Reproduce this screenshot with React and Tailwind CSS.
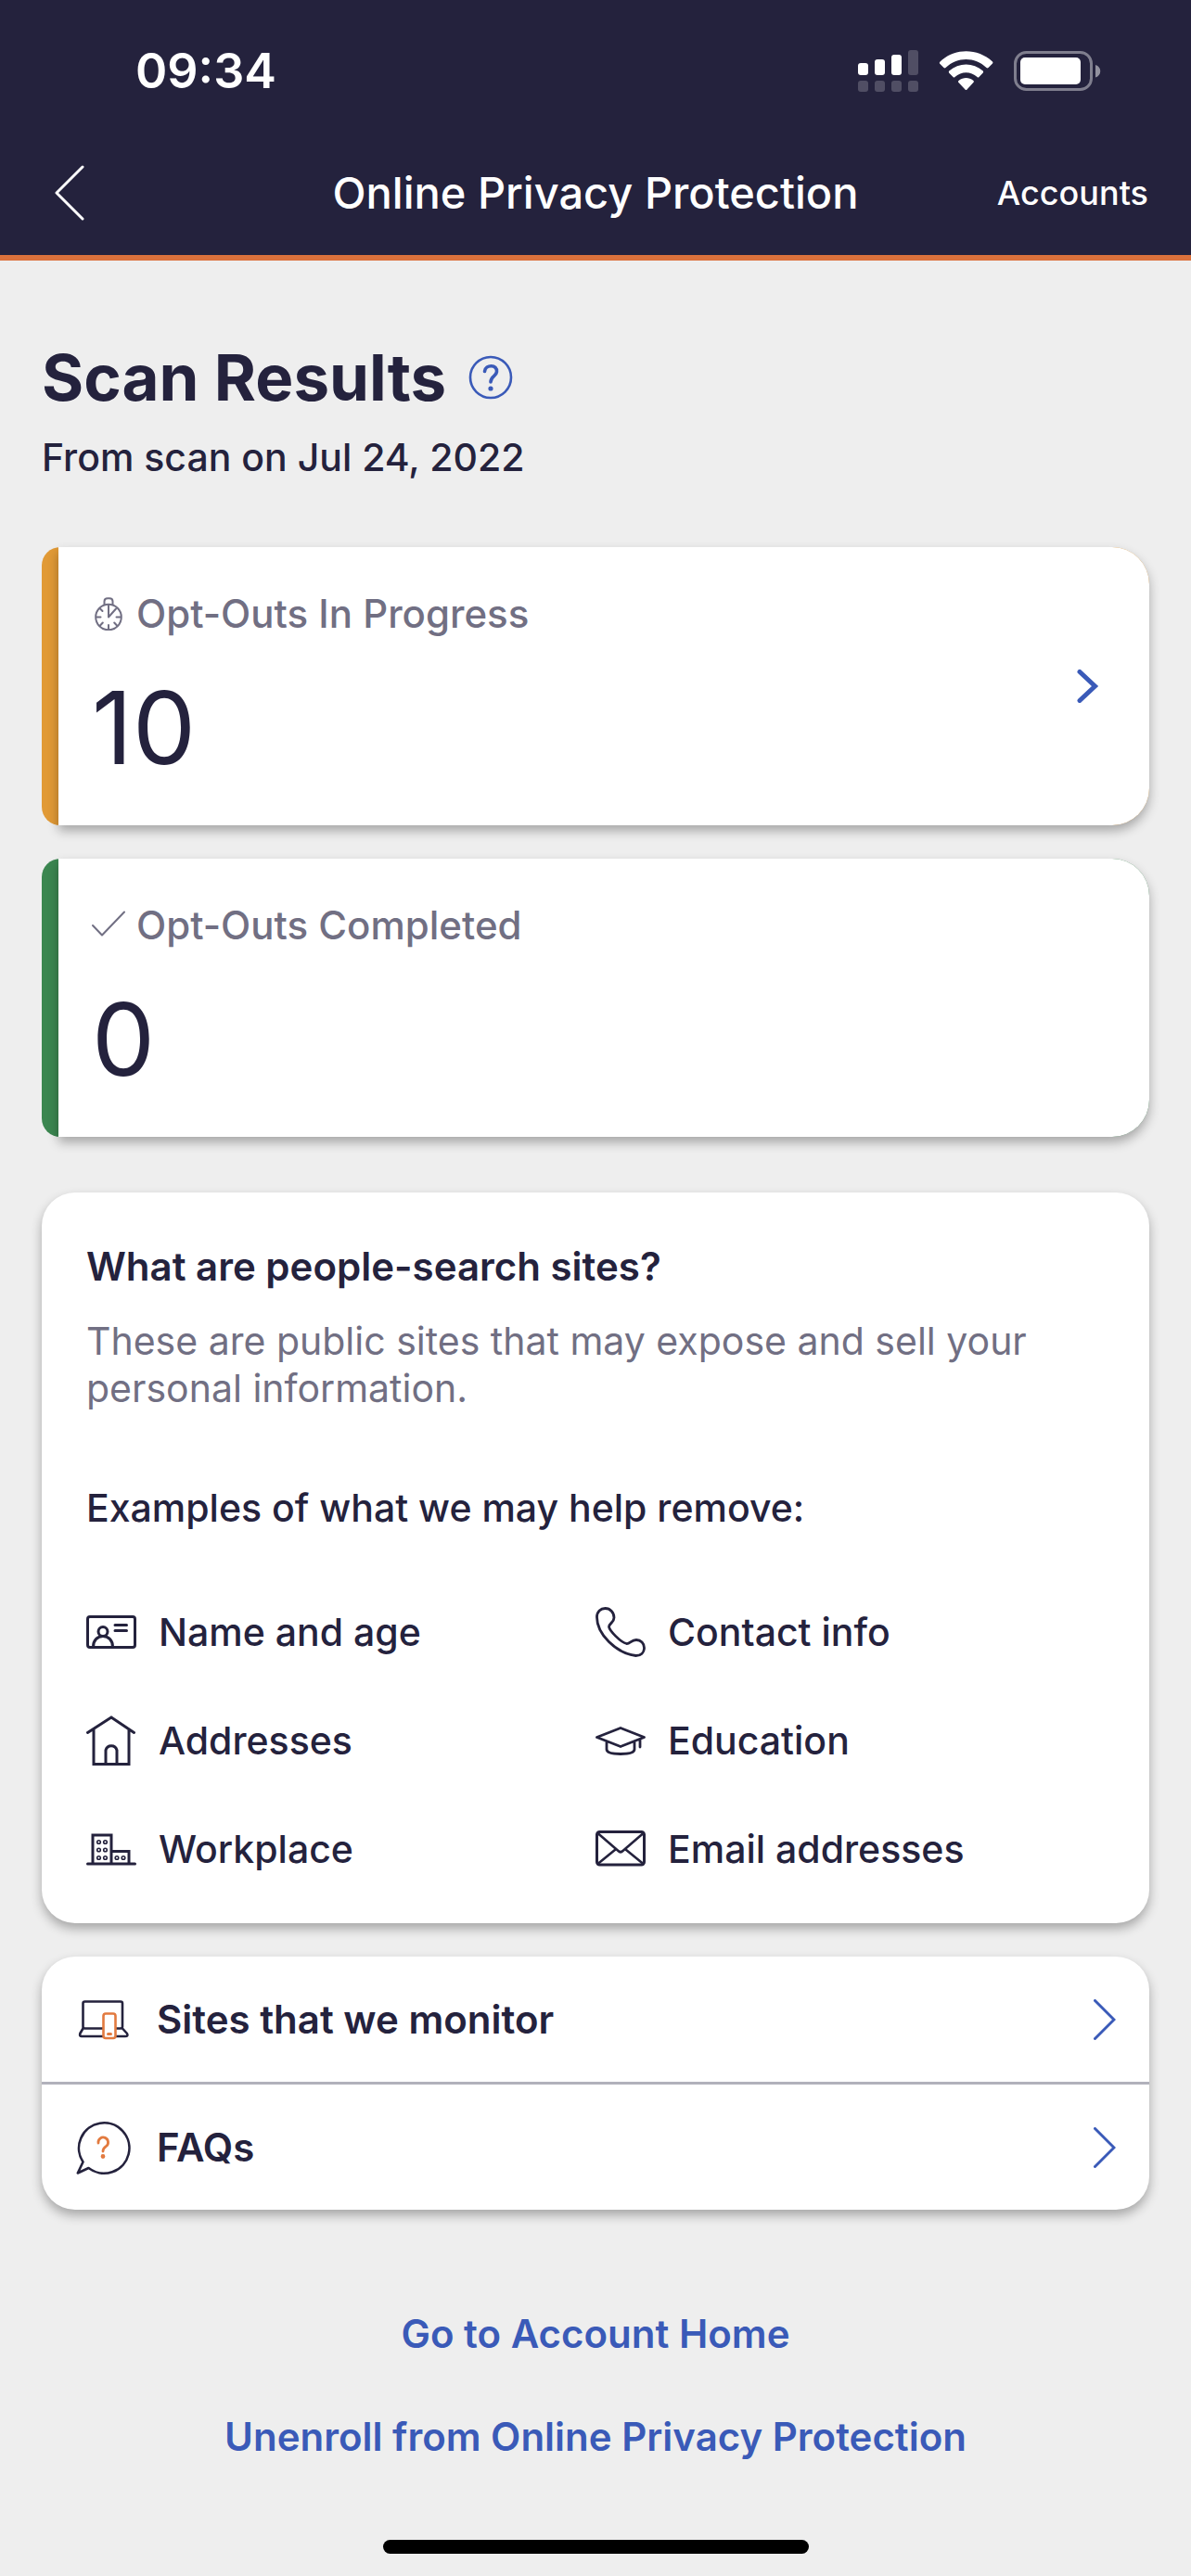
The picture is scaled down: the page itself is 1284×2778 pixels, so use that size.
const STATS = [
  { id: 'progress', label: 'Opt-Outs In Progress', value: 10, bar: 'bg-[#e19a36]', icon: StopwatchIcon, link: true },
  { id: 'completed', label: 'Opt-Outs Completed', value: 0, bar: 'bg-[#3b8650]', icon: CheckIcon, link: false },
]

const EXAMPLES = [
  { label: 'Name and age', icon: IdCardIcon },
  { label: 'Contact info', icon: PhoneIcon },
  { label: 'Addresses', icon: HouseIcon },
  { label: 'Education', icon: GradCapIcon },
  { label: 'Workplace', icon: BuildingIcon },
  { label: 'Email addresses', icon: EnvelopeIcon },
]

const MORE = [
  { label: 'Sites that we monitor', icon: DevicesIcon },
  { label: 'FAQs', icon: FaqIcon },
]

const CARD_SHADOW = 'shadow-[0_6px_12px_rgba(0,0,0,0.3)]'

function Icon({ className = 'w-[54px] h-[54px]', size = 54, sw = 3, children }) {
  return (
    <svg
      className={`flex-shrink-0 ${className}`}
      viewBox={`0 0 ${size} ${size}`}
      fill="none"
      stroke="currentColor"
      strokeWidth={sw}
      strokeLinecap="round"
      strokeLinejoin="round"
      aria-hidden="true"
    >
      {children}
    </svg>
  )
}

function StopwatchIcon() {
  return (
    <Icon className="w-9 h-9" size={36} sw={2}>
      <circle cx="18" cy="21.5" r="13.8" />
      <path d="M13.500 7.500V4.500Q13.500 1.200 17 1.200H19Q22.500 1.200 22.500 4.500V7.500" />
      <path d="M18 8V21.500L26 12.500" />
      <path d="M5 21.500H9.500M26.500 21.500H31M18 30V34.500M9 12.500L11.500 15M9 30.500L11.800 27.500M27 30.500L24.200 27.500" />
    </Icon>
  )
}

function CheckIcon() {
  return (
    <Icon className="w-9 h-9" size={36} sw={2}>
      <path d="M1 18L11 28.500L35 3.500" />
    </Icon>
  )
}

function IdCardIcon() {
  return (
    <Icon>
      <rect x="1.500" y="10.500" width="51" height="33" rx="2.500" />
      <circle cx="18" cy="26.500" r="5" />
      <path d="M7.500 43C7.500 36 12 31.500 18 31.500S28.500 36 28.500 43M31 19.500H43.500M31 25.500H43.500" />
    </Icon>
  )
}

function PhoneIcon() {
  return (
    <Icon sw={2.800}>
      <path d="M1.500 11C1.500 5 5.500 1.500 10.500 1.500C16 1.500 20 6 20 11.500C20 17 14.500 17.500 14.500 21.500C15.500 26 27 38 33.500 39.500C37 40 38.500 35.500 44 35.500C49 35.500 52.500 39.500 52.500 44C52.500 49 49 52.500 43.500 52.500C22 50 1.500 29 1.500 11Z" />
    </Icon>
  )
}

function HouseIcon() {
  return (
    <Icon>
      <path d="M1.500 18.500L27 2L51.500 18.500M8 15.500V52.500H46V15.500M21 52V37.500A6.200 6.200 0 0 1 33 37.500V52" strokeLinejoin="miter" />
    </Icon>
  )
}

function GradCapIcon() {
  return (
    <Icon sw={2.800}>
      <path d="M1.500 23.500L27 13.500L52.500 23.500L27 33.500ZM12 28.500V36.500C12 40 19 41.500 27 41.500S42 40 42 36.500V28.500M48 26V34" />
    </Icon>
  )
}

function BuildingIcon() {
  return (
    <Icon>
      <path d="M1.500 43H52.500M7 43V12H27V43M27 29.500H46V43" strokeLinejoin="miter" />
      <g strokeWidth="1.600">
        <circle cx="13.500" cy="19.500" r="1.800" />
        <circle cx="20.500" cy="19.500" r="1.800" />
        <circle cx="13.500" cy="28" r="1.800" />
        <circle cx="20.500" cy="28" r="1.800" />
        <circle cx="13.500" cy="36.500" r="1.800" />
        <circle cx="20.500" cy="36.500" r="1.800" />
        <circle cx="33" cy="36.500" r="1.800" />
        <circle cx="40" cy="36.500" r="1.800" />
      </g>
    </Icon>
  )
}

function EnvelopeIcon() {
  return (
    <Icon>
      <rect x="1.500" y="8.500" width="51" height="35.500" rx="3" />
      <path d="M2.500 10L24.500 29Q27 31.500 29.500 29L51.500 10M2.500 43L21.500 27.500M51.500 43L32.500 27.500" strokeWidth="2.600" />
    </Icon>
  )
}

function DevicesIcon() {
  return (
    <Icon className="w-[60px] h-[60px]" size={60} sw={2.600}>
      <rect x="8.500" y="10.500" width="42.500" height="29" rx="2" />
      <path d="M8.500 39.500L5.300 45Q4.500 48 7 48H54Q57.500 48 56 45L51 39.500" />
      <g stroke="#e27a3f">
        <rect x="30.500" y="23.500" width="13" height="26.500" rx="2.500" fill="#fff" />
        <path d="M35.500 45.500H38.500" strokeWidth="3" />
      </g>
    </Icon>
  )
}

function FaqIcon() {
  return (
    <Icon className="w-[60px] h-[60px]" size={60} sw={2.600}>
      <path d="M8.500 45.500A27.200 27.200 0 1 1 14.500 52L2.800 57.500Z" />
      <g stroke="#e27a3f" strokeWidth="2.800">
        <path d="M25 25A5.300 5.300 0 1 1 33.500 28.500C31.500 30 30 31 30 34" />
        <circle cx="30" cy="39.500" r="1" fill="#e27a3f" />
      </g>
    </Icon>
  )
}

function StatusBar() {
  return (
    <div className="flex items-center justify-between pt-[46px] pl-[146px] pr-[97px]">
      <span className="text-[52px] leading-[62px] font-semibold">09:34</span>
      <svg className="w-[262px] h-[46px]" viewBox="0 0 262 46" fill="#fff" aria-hidden="true">
        <rect x="0" y="14" width="11" height="13" rx="3" />
        <rect x="18" y="10" width="11" height="17" rx="3" />
        <rect x="36" y="5" width="11" height="22" rx="3" />
        <g opacity="0.2">
          <rect x="54" y="0" width="11" height="27" rx="3" />
          <rect x="0" y="33" width="11" height="12" rx="3" />
          <rect x="18" y="33" width="11" height="12" rx="3" />
          <rect x="36" y="33" width="11" height="12" rx="3" />
          <rect x="54" y="33" width="11" height="12" rx="3" />
        </g>
        <path d="M88 14.500Q87.500 13.500 88.500 12.500C104 -2.500 129 -2.500 145 12.500Q145.800 13.500 145 14.500L140.500 19Q139.500 19.800 138.500 19C126 7 107 7 94.500 19Q93.500 19.800 92.500 19Z" />
        <path d="M98 24.500Q97.500 23.500 98.200 22.500C109 13.200 124 13.200 134.800 22.500Q135.500 23.500 134.800 24.500L130.500 29Q129.500 30 128.500 29C121.500 22.500 111.500 22.500 104.500 29Q103.500 30 102.500 29Z" />
        <path d="M108 34.500Q107.800 33.500 108.800 32.800C113.500 29 119.500 29 124.200 32.800Q125.200 33.500 124.800 34.500L117.500 42.500Q116.500 43.500 115.500 42.500Z" />
        <rect x="169.500" y="2.500" width="82" height="40" rx="12" fill="none" stroke="#fff" strokeOpacity="0.420" strokeWidth="3" />
        <rect x="175" y="8" width="65" height="29" rx="5" />
        <path d="M256 16C263 18 263 27.500 256 29.500Z" opacity="0.500" />
      </svg>
    </div>
  )
}

function Header() {
  return (
    <header className="bg-[#24223d] text-white border-b-[6px] border-[#db713c]">
      <StatusBar />
      <div className="grid grid-cols-[1fr_auto_1fr] items-center h-[134px] mt-[33px] px-[46px]">
        <button type="button" aria-label="Back" className="justify-self-start ml-3">
          <svg className="w-[34px] h-[60px]" viewBox="0 0 34 60" fill="none" stroke="currentColor" strokeWidth="3" strokeLinecap="round" strokeLinejoin="round" aria-hidden="true">
            <path d="M31 2L3 30L31 58" />
          </svg>
        </button>
        <h1 className="text-[47px] leading-[56px] font-medium">Online Privacy Protection</h1>
        <a href="#accounts" className="justify-self-end text-[36px] leading-[42px] font-medium">Accounts</a>
      </div>
    </header>
  )
}

function StatCard({ stat }) {
  const StatIcon = stat.icon
  return (
    <section className={`rounded-l-[20px] rounded-r-[40px] ${stat.bar}`}>
      <div className={`flex items-center justify-between ml-[18px] pl-9 pr-[54px] h-[300px] bg-white rounded-r-[40px] ${CARD_SHADOW}`}>
        <div className="self-start pt-[46px]">
          <h3 className="flex items-center gap-3 text-[42px] leading-[52px] font-medium text-[#716f83]">
            <StatIcon />
            {stat.label}
          </h3>
          <p className="mt-[34px] text-[108px] leading-[126px]">{stat.value}</p>
        </div>
        {stat.link && (
          <button type="button" aria-label={stat.label} className="text-[#3a5ab8]">
            <svg className="w-6 h-9" viewBox="0 0 24 36" fill="none" stroke="currentColor" strokeWidth="5" strokeLinecap="round" aria-hidden="true">
              <path d="M3 2.500L19.500 18L3 33.500" />
            </svg>
          </button>
        )}
      </div>
    </section>
  )
}

export default function App() {
  return (
    <div className="flex flex-col min-h-screen bg-[#eeeeee] text-[#24223d] font-['Inter',sans-serif]">
      <Header />

      <main className="flex flex-col px-[45px] pt-[83px]">
        <div className="flex items-center gap-6">
          <h2 className="text-[69px] leading-[86px] font-bold">Scan Results</h2>
          <button type="button" aria-label="About scan results" className="text-[#3a5ab8]">
            <Icon className="w-12 h-12" size={48} sw={2.600}>
              <circle cx="24" cy="24" r="22" />
              <path d="M17.500 17.500C18.500 9.500 31.500 10 30.500 18C30 23 24 22.500 24 29" strokeWidth="3.600" />
              <circle cx="24" cy="36" r="1.300" fill="currentColor" />
            </Icon>
          </button>
        </div>
        <p className="mt-[18px] text-[41px] leading-[50px] font-medium">From scan on Jul 24, 2022</p>

        {/* Counts */}
        <div className="flex flex-col gap-9 mt-[72px]">
          {STATS.map(stat => <StatCard key={stat.id} stat={stat} />)}
        </div>

        {/* People-search sites */}
        <section className={`mt-[60px] px-12 pt-[55px] pb-[22px] bg-white rounded-[36px] ${CARD_SHADOW}`}>
          <h3 className="text-[42px] leading-[50px] font-semibold">What are people-search sites?</h3>
          <p className="mt-[30px] text-[41px] leading-[51px] text-[#716f83]">
            These are public sites that may expose and sell your personal information.
          </p>
          <h4 className="mt-[78px] text-[41px] leading-[50px] font-medium">Examples of what we may help remove:</h4>
          <ul className="grid grid-cols-2 mt-[50px]">
            {EXAMPLES.map(({ label, icon: ExampleIcon }) => (
              <li key={label} className="flex items-center gap-6 h-[117px] text-[41px] leading-[50px] font-medium">
                <ExampleIcon />
                {label}
              </li>
            ))}
          </ul>
        </section>

        {/* More links */}
        <nav className={`mt-9 divide-y-[3px] divide-[#b1b1bb] bg-white rounded-[36px] ${CARD_SHADOW}`}>
          {MORE.map(({ label, icon: MoreIcon }) => (
            <a key={label} href="#more" className="flex items-center box-content h-[135px] px-9 text-[42px] leading-[50px] font-semibold">
              <MoreIcon />
              <span className="flex-1 ml-7">{label}</span>
              <svg className="w-6 h-11 text-[#3a5ab8]" viewBox="0 0 24 44" fill="none" stroke="currentColor" strokeWidth="3" strokeLinecap="round" aria-hidden="true">
                <path d="M1.500 1.500L22 22L1.500 42.500" />
              </svg>
            </a>
          ))}
        </nav>

        <div className="flex flex-col items-center gap-[61px] mt-[109px] text-[42px] leading-[50px] font-semibold text-[#3a5ab8]">
          <a href="#home">Go to Account Home</a>
          <a href="#unenroll">Unenroll from Online Privacy Protection</a>
        </div>
      </main>

      <div className="w-[459px] h-[15px] mt-auto mb-6 mx-auto rounded-full bg-black" />
    </div>
  )
}
